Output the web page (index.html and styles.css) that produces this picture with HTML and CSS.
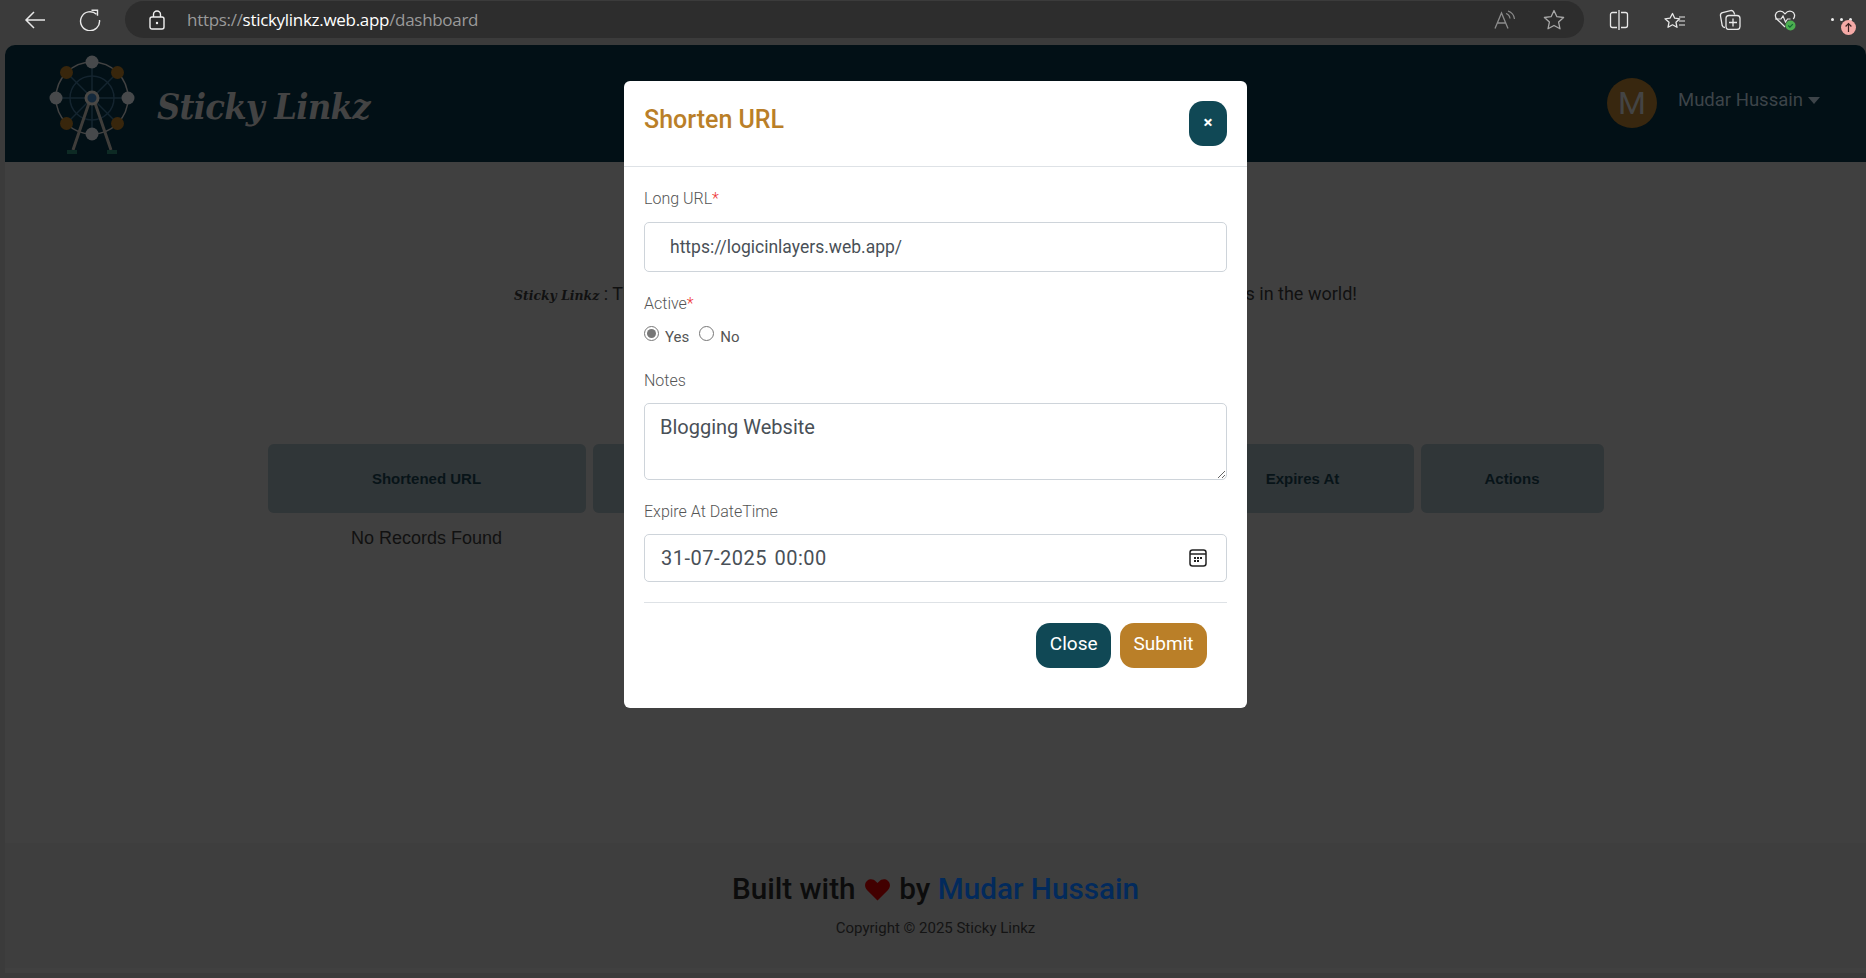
FILE: index.html
```html
<!DOCTYPE html>
<html lang="en">
<head>
<meta charset="utf-8">
<title>Sticky Linkz</title>
<link rel="stylesheet" href="styles.css">
</head>
<body>
<div class="chrome">
  <svg class="ic back" width="22" height="20" viewBox="0 0 22 20"><path d="M21 10H2M10 2l-8 8 8 8" fill="none" stroke="#e8e8e8" stroke-width="1.5"/></svg>
  <svg class="ic reload" width="22" height="22" viewBox="0 0 22 22"><path d="M17.5 5.2A9.5 9.5 0 1 0 20.5 11" fill="none" stroke="#e8e8e8" stroke-width="1.4"/><path d="M12.5 1.2h6v5.6" fill="none" stroke="#e8e8e8" stroke-width="1.4"/></svg>
  <div class="omnibox">
    <svg class="ic lock" width="16" height="20" viewBox="0 0 16 20"><rect x="1" y="7" width="14" height="12" rx="2" fill="none" stroke="#f0f0f0" stroke-width="1.4"/><path d="M4.5 7V4.5a3.5 3.5 0 0 1 7 0V7" fill="none" stroke="#f0f0f0" stroke-width="1.4"/><circle cx="8" cy="13" r="1.2" fill="#f0f0f0"/></svg>
    <div class="url"><span class="url-dim">https://</span><span class="url-host">stickylinkz.web.app</span><span class="url-dim">/dashboard</span></div>
    <svg class="ic aloud" width="22" height="20" viewBox="0 0 22 20"><path d="M1 18.5L7.5 3l6.5 15.5M3.4 13h8.2" fill="none" stroke="#8c8c8c" stroke-width="1.3"/><path d="M12 3.5a6 6 0 0 1 4 5M14 1a9.500 9.500 0 0 1 6.500 8" fill="none" stroke="#8c8c8c" stroke-width="1.2"/></svg>
    <svg class="ic star" width="22" height="21" viewBox="0 0 22 21"><path d="M11 1.500l2.900 6.200 6.700.800-5 4.600 1.400 6.700L11 16.500l-6 3.300 1.400-6.700-5-4.600 6.700-.800z" fill="none" stroke="#a8a8a8" stroke-width="1.300" stroke-linejoin="round"/></svg>
  </div>
  <div class="tools">
    <svg class="ic split" width="20" height="20" viewBox="0 0 20 20"><path d="M8 2.500H3.500a2 2 0 0 0-2 2v11a2 2 0 0 0 2 2H8M12 2.500h4.500a2 2 0 0 1 2 2v11a2 2 0 0 1-2 2H12" fill="none" stroke="#e8e8e8" stroke-width="1.300"/><path d="M10 0v20" stroke="#e8e8e8" stroke-width="1.300"/></svg>
    <svg class="ic" width="22" height="20" viewBox="0 0 22 20"><path d="M8.500 1.500l2.200 4.700 5 .6-3.700 3.500 1 5-4.500-2.500-4.500 2.500 1-5L1 6.800l5-.6z" transform="translate(0 2)" fill="none" stroke="#e8e8e8" stroke-width="1.300" stroke-linejoin="round"/><path d="M15 7h6M15 11h6M15 15h6" stroke="#e8e8e8" stroke-width="1.200"/></svg>
    <svg class="ic" width="22" height="21" viewBox="0 0 22 21"><path d="M6 18.500c-1.500 0-2.400-.8-2.800-2L1.500 7c-.3-1.700.5-3 2-3.400l8-2c1.500-.3 2.600.3 3.200 1.500l1 2.400" fill="none" stroke="#e8e8e8" stroke-width="1.300"/><rect x="7" y="6.500" width="14" height="14" rx="3" fill="none" stroke="#e8e8e8" stroke-width="1.300"/><path d="M14 9.500v8M10 13.500h8" stroke="#e8e8e8" stroke-width="1.300"/></svg>
    <svg class="ic" width="22" height="22" viewBox="0 0 22 22"><path d="M11 18L2.800 10C.4 7.400 1.300 3.500 4.300 2.500c2.600-.9 5 .3 6.700 2.300 1.700-2 4.100-3.200 6.700-2.300 3 1 3.900 4.900 1.500 7.500" fill="none" stroke="#e8e8e8" stroke-width="1.300"/><path d="M1 10h6l2-3 2.500 6 2-3h3" fill="none" stroke="#e8e8e8" stroke-width="1.200"/><circle cx="16.500" cy="16.500" r="5" fill="#4caf50"/><path d="M14.200 16.500l1.700 1.700 2.900-3" fill="none" stroke="#163" stroke-width="1.200"/></svg>
    <div class="more">
      <span class="dot"></span><span class="dot"></span><span class="dot"></span>
      <svg class="badge" width="15" height="15" viewBox="0 0 15 15"><circle cx="7.500" cy="7.500" r="7.500" fill="#f4a9a6"/><path d="M7.500 12V3.800M4.600 6.500l2.900-2.900 2.900 2.900" fill="none" stroke="#3a2020" stroke-width="1.200"/></svg>
    </div>
  </div>
</div>

<div class="page">
  <header class="topbar">
    <div class="brand">
      <svg class="logo" width="86" height="100" viewBox="0 0 86 100">
        <g fill="none" stroke="#14242f" stroke-width="1.500">
          <circle cx="43" cy="43" r="22"/>
          <path d="M43 7v72M7 43h72M17.500 17.500l51 51M68.500 17.500l-51 51"/>
        </g>
        <circle cx="43" cy="43" r="36" fill="none" stroke="#424242" stroke-width="1.500"/>
        <path d="M40 48L24 95M46 48l16 47" stroke="#3f3d3a" stroke-width="3" fill="none"/>
        <g fill="#47494b">
          <circle cx="43" cy="7" r="6.500"/><circle cx="7" cy="43" r="6.500"/><circle cx="79" cy="43" r="6.500"/><circle cx="43" cy="79" r="6.500"/>
        </g>
        <g fill="#38260c">
          <circle cx="17.500" cy="17.500" r="6.500"/><circle cx="68.500" cy="17.500" r="6.500"/><circle cx="17.500" cy="68.500" r="6.500"/><circle cx="68.500" cy="68.500" r="6.500"/>
        </g>
        <circle cx="43" cy="43" r="6" fill="#14293c" stroke="#4a4845" stroke-width="3"/>
        <path d="M18 95h10v4H18zM58 95h10v4H58z" fill="#0d2a24"/>
      </svg>
      <div class="brand-name">Sticky Linkz</div>
    </div>
    <div class="user">
      <div class="avatar">M</div>
      <div class="user-name">Mudar Hussain</div>
      <span class="caret"></span>
    </div>
  </header>

  <main class="content">
    <p class="tagline"><span class="tag-brand">Sticky Linkz</span> : The easiest way to make short, shareable, sticky links for all of the best websites in the world!</p>
    <div class="table">
      <div class="th">Shortened URL</div>
      <div class="th">Long URL</div>
      <div class="th">Active</div>
      <div class="th">Notes</div>
      <div class="th">Expires At</div>
      <div class="th">Actions</div>
      <div class="empty">No Records Found</div>
    </div>
  </main>

  <footer class="footer">
    <div class="built">Built with <svg class="heart" width="25" height="22" viewBox="0 0 25 22"><path d="M12.500 21.500L2.200 11.200C-.7 8.300-.6 4 2.200 1.700 4.800-.4 8.600 0 10.900 2.400l1.600 1.700 1.600-1.700C16.400 0 20.200-.4 22.800 1.700c2.800 2.300 2.900 6.600 0 9.500z" fill="#420000"/></svg> by <a class="author" href="#">Mudar Hussain</a></div>
    <div class="copy">Copyright © 2025 Sticky Linkz</div>
  </footer>
</div>

<div class="modal">
  <div class="modal-head">
    <h2 class="modal-title">Shorten URL</h2>
    <button class="x-btn" type="button">×</button>
  </div>
  <form class="modal-body">
    <label class="lbl lbl-url">Long URL<span class="req">*</span></label>
    <input class="field field-url" type="text" value="https://logicinlayers.web.app/">
    <label class="lbl lbl-active">Active<span class="req">*</span></label>
    <div class="radios">
      <input class="radio" type="radio" name="active" checked><span class="radio-text">Yes</span>
      <input class="radio" type="radio" name="active"><span class="radio-text">No</span>
    </div>
    <label class="lbl lbl-notes">Notes</label>
    <textarea class="field field-notes">Blogging Website</textarea>
    <label class="lbl lbl-exp">Expire At DateTime</label>
    <div class="field field-date">
      <span class="date-text">31-07-2025 00:00</span>
      <svg width="18" height="18" viewBox="0 0 18 18"><rect x="1" y="1" width="16" height="16" rx="2.500" fill="none" stroke="#222" stroke-width="1.500"/><path d="M1 5h16" stroke="#222" stroke-width="1.500"/><path d="M5 8h2v2H5zM8 8h2v2H8zM11 8h2v2h-2zM5 11h2v2H5zM8 11h2v2H8z" fill="#222"/></svg>
    </div>
    <div class="modal-foot">
      <button class="btn btn-close" type="button">Close</button>
      <button class="btn btn-submit" type="button">Submit</button>
    </div>
  </form>
</div>
</body>
</html>
```
FILE: styles.css
```css
* { box-sizing: border-box; }
html, body { margin: 0; padding: 0; }
body {
  width: 1866px;
  height: 978px;
  overflow: hidden;
  background: #3b3b3b;
  font-family: Roboto, "Liberation Sans", sans-serif;
  position: relative;
}
.ic { display: block; flex: none; }

/* browser chrome */
.chrome { height: 45px; display: flex; align-items: center; padding: 0 0 6px 24px; }
.back { margin-right: 33px; }
.reload { margin-right: 24px; }
.omnibox {
  width: 1459px; height: 37px; background: #2d2d2d; border-radius: 19px;
  display: flex; align-items: center; padding: 0 19px 0 24px;
}
.lock { margin-right: 22px; }
.url { flex: 1; font-family: "Open Sans", sans-serif; font-size: 17px; letter-spacing: -0.3px; }
.url-dim { color: #9a9a9a; }
.url-host { color: #fff; }
.aloud { margin-right: 27px; }
.tools { display: flex; align-items: center; gap: 33px; margin-left: 25px; }
.split { margin-right: 2px; }
.more { display: flex; gap: 6px; position: relative; width: 20px; margin-left: 2px; }
.dot { flex: none; width: 3px; height: 3px; border-radius: 50%; background: #eee; }
.badge { position: absolute; left: 10px; top: 2px; }

/* page */
.page {
  margin-left: 5px; height: 928px; background: #404040;
  border-radius: 10px 10px 0 0; overflow: hidden;
  display: flex; flex-direction: column;
}
.topbar {
  height: 117px; flex: none; background: #021016;
  display: flex; justify-content: space-between; padding: 10px 46px 0 44px;
}
.brand { display: flex; align-items: flex-start; }
.brand-name {
  margin: 26px 0 0 22px; width: 215px; color: #434343;
  font-family: "DejaVu Serif Condensed", "DejaVu Serif", serif;
  font-style: italic; font-weight: 700; font-size: 36px; line-height: 50px;
  letter-spacing: -0.8px; white-space: nowrap;
}
.user { display: flex; align-items: flex-start; padding-top: 23px; }
.avatar {
  width: 50px; height: 50px; border-radius: 50%; background: #38270f;
  color: #444; font-size: 32px; line-height: 50px; text-align: center;
}
.user-name { margin: 12px 0 0 21px; color: #3d4449; font-size: 18.5px; line-height: 21px; }
.caret {
  margin: 19px 0 0 5px; width: 0; height: 0;
  border-left: 6px solid transparent; border-right: 6px solid transparent; border-top: 7px solid #3d4449;
}

.content { flex: 1; display: flex; flex-direction: column; align-items: center; }
.tagline {
  margin: 121px 0 0; color: #111; font-size: 18px; line-height: 22px; white-space: nowrap;
}
.tag-brand { font-family: "DejaVu Serif Condensed", serif; font-style: italic; font-weight: 700; font-size: 13.8px; }
.table {
  margin: 138px 0 0; width: 1336px;
  display: grid; grid-template-columns: 318px 192px 193px 193px 222px 183px; column-gap: 7px;
  font-family: "Liberation Sans", sans-serif;
}
.th {
  height: 69px; background: #303638; border-radius: 6px;
  display: flex; align-items: center; justify-content: center;
  color: #081418; font-size: 15px; font-weight: 700;
}
.empty { padding-top: 15px; text-align: center; color: #111; font-size: 18px; line-height: 21px; }

.footer { height: 125px; flex: none; margin-bottom: 5px; background: #3e3e3e; text-align: center; }
.built { margin-top: 28px; color: #0c0c0c; font-size: 29.7px; font-weight: 500; line-height: 36px; }
.heart { vertical-align: -2px; margin: 0 2px; }
.author { color: #022a5c; text-decoration: none; }
.copy { margin-top: 13px; color: #141414; font-size: 15px; line-height: 17px; }

/* modal */
.modal {
  position: absolute; left: 624px; top: 81px; width: 623px; height: 627px;
  background: #fff; border-radius: 6px;
}
.modal-head {
  height: 86px; border-bottom: 1px solid #dee2e6;
  display: flex; justify-content: space-between; padding: 20px 20px 0 20px;
}
.modal-title { margin: 0; color: #ba7f28; font-size: 25px; font-weight: 500; line-height: 37px; }
.x-btn {
  width: 38px; height: 45px; border: 0; border-radius: 14px; background: #104855;
  color: #fff; font-family: Roboto, sans-serif; font-size: 17px; font-weight: 700; padding: 0 0 4px;
}
.modal-body { display: flex; flex-direction: column; padding: 0 20px; }
.lbl { display: block; color: #555; font-size: 16px; font-weight: 300; line-height: 20px; }
.lbl-url { margin-top: 22px; }
.lbl-active { margin-top: 22px; }
.lbl-notes { margin-top: 26px; }
.lbl-exp { margin-top: 22px; }
.req { color: #e33; }
.field {
  display: block; width: 100%; border: 1px solid #ced4da; border-radius: 5px;
  background: #fff; color: #495057; font-family: Roboto, sans-serif; font-size: 20px; outline: 0;
}
.field-url { margin-top: 13px; height: 50px; padding: 0 25px; font-size: 17.5px; }
.field-notes { margin-top: 12px; height: 77px; padding: 11px 15px; line-height: 24px; }
.field-date {
  margin-top: 12px; height: 48px; padding: 0 19px 0 16px;
  display: flex; align-items: center; justify-content: space-between;
}
.date-text { letter-spacing: 0.5px; word-spacing: 2px; }
.radios { display: flex; align-items: center; height: 20px; margin-top: 11px; color: #555; font-size: 15px; font-weight: 400; }
.radio { width: 15px; height: 15px; margin: 0; accent-color: #777; position: relative; top: -2px; }
.radio-text { margin: 3px 10px 0 6px; }
.modal-foot { margin-top: 20px; border-top: 1px solid #dee2e6; padding: 20px 20px 0 0; display: flex; justify-content: flex-end; gap: 9px; }
.btn {
  height: 45px; border: 0; border-radius: 14px; color: #fff;
  font-family: Roboto, sans-serif; font-size: 19px; font-weight: 400; padding: 0 13.5px 5px;
}
.btn-close { background: #104855; }
.btn-submit { background: #ba7f28; }
```
